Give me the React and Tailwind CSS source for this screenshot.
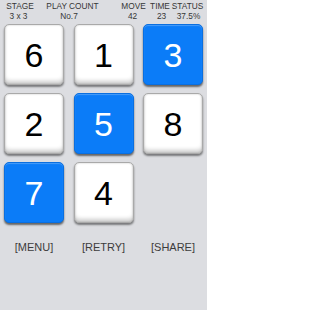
import React from "react";

const tiles = [
  { n: 6, blue: false },
  { n: 1, blue: false },
  { n: 3, blue: true },
  { n: 2, blue: false },
  { n: 5, blue: true },
  { n: 8, blue: false },
  { n: 7, blue: true },
  { n: 4, blue: false },
  { n: null, blue: false },
];

function Tile({ n, blue }) {
  if (n === null) return <div className="h-[61px]" />;
  if (blue) {
    return (
      <div className="h-[61px] rounded-[5px] bg-[#0b7cf8] border border-[#0a6fe0] shadow-[0_2px_2px_rgba(0,0,0,0.55),inset_0_1px_1px_rgba(255,255,255,0.25)] flex items-center justify-center text-white text-[34px] leading-none">
        {n}
      </div>
    );
  }
  return (
    <div className="h-[61px] rounded-[5px] bg-white border border-[#a9a9a9] shadow-[0_2px_2px_rgba(0,0,0,0.45),inset_0_-4px_4px_-1px_rgba(0,0,0,0.2),inset_0_0_2px_rgba(0,0,0,0.25)] flex items-center justify-center text-black text-[34px] leading-none">
      {n}
    </div>
  );
}

export default function App() {
  return (
    <div
      className="w-[207px] h-[310px] bg-[#dcdde1] overflow-hidden"
      style={{ fontFamily: '"Liberation Sans", Arial, sans-serif' }}
    >
      <div className="flex pt-[1px] text-[8.3px] leading-[10px] text-[#363636]">
        <div className="w-[40px] flex flex-col items-center">
          <span>STAGE</span>
          <span className="pr-[3px]">3 x 3</span>
        </div>
        <div className="w-[65px] flex flex-col items-center">
          <span>PLAY COUNT</span>
          <span className="pr-[7px]">No.7</span>
        </div>
        <div className="ml-[13px] w-[31px] flex flex-col items-center">
          <span>MOVE</span>
          <span className="pr-[2px]">42</span>
        </div>
        <div className="w-[22px] flex flex-col items-center">
          <span>TIME</span>
          <span className="pl-[3px]">23</span>
        </div>
        <div className="w-[33px] flex flex-col items-center">
          <span>STATUS</span>
          <span className="pl-[2px]">37.5%</span>
        </div>
      </div>

      <div className="mt-[3px] px-[4px] grid grid-cols-[60px_60px_60px] gap-x-[9.5px] gap-y-[8px]">
        {tiles.map((t, i) => (
          <Tile key={i} n={t.n} blue={t.blue} />
        ))}
      </div>

      <div className="mt-[18px] px-[4px] grid grid-cols-[60px_60px_60px] gap-x-[9.5px] text-[11px] leading-[13px] text-[#3c3c3c]">
        <div className="text-center">[MENU]</div>
        <div className="text-center">[RETRY]</div>
        <div className="text-center">[SHARE]</div>
      </div>
    </div>
  );
}
